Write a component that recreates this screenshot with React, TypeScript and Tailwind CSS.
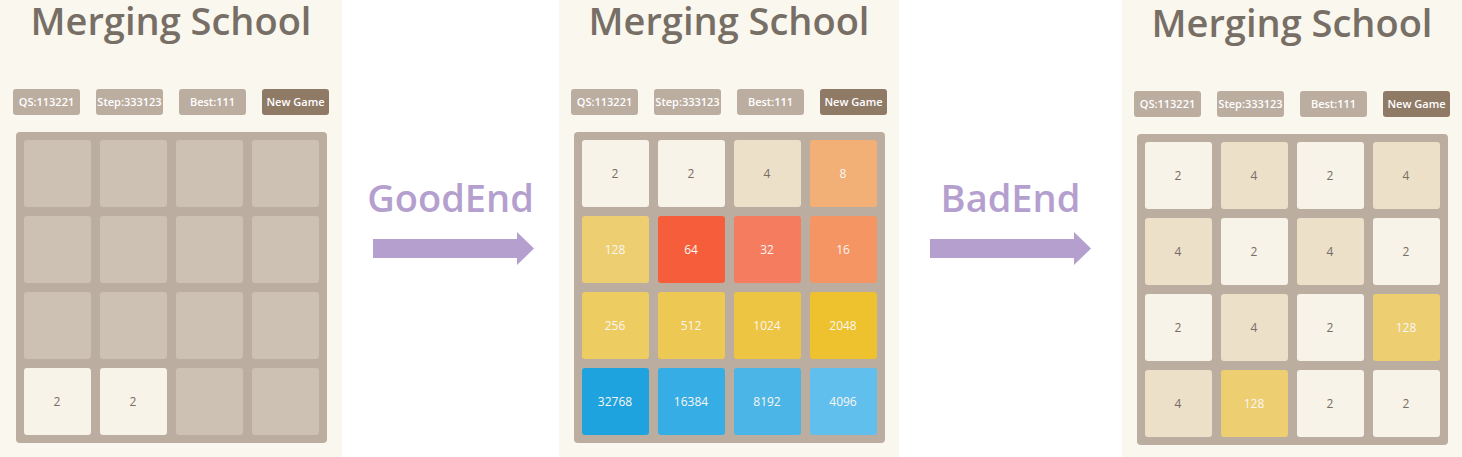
const font = { fontFamily: '"Open Sans", "DejaVu Sans", sans-serif' };

const tileStyles: Record<number, string> = {
  0: "bg-[#cdc1b4]",
  2: "bg-[#f7f3e8] text-[#776e65]",
  4: "bg-[#ece0c9] text-[#776e65]",
  8: "bg-[#f2b077] text-[#f9f6f2]",
  16: "bg-[#f59563] text-[#f9f6f2]",
  32: "bg-[#f67c5f] text-[#f9f6f2]",
  64: "bg-[#f65e3b] text-[#f9f6f2]",
  128: "bg-[#edce71] text-[#f9f6f2]",
  256: "bg-[#edcc62] text-[#f9f6f2]",
  512: "bg-[#edc853] text-[#f9f6f2]",
  1024: "bg-[#eec543] text-[#f9f6f2]",
  2048: "bg-[#edc22e] text-[#f9f6f2]",
  4096: "bg-[#60bfed] text-[#f9f6f2]",
  8192: "bg-[#4bb5e7] text-[#f9f6f2]",
  16384: "bg-[#36aee5] text-[#f9f6f2]",
  32768: "bg-[#1fa3df] text-[#f9f6f2]",
};

const boards = {
  start: [
    [0, 0, 0, 0],
    [0, 0, 0, 0],
    [0, 0, 0, 0],
    [2, 2, 0, 0],
  ],
  good: [
    [2, 2, 4, 8],
    [128, 64, 32, 16],
    [256, 512, 1024, 2048],
    [32768, 16384, 8192, 4096],
  ],
  bad: [
    [2, 4, 2, 4],
    [4, 2, 4, 2],
    [2, 4, 2, 128],
    [4, 128, 2, 2],
  ],
};

function Board({ cells }: { cells: number[][] }) {
  return (
    <div className="grid grid-cols-4 gap-[9px] rounded-[4px] bg-[#bbada0] p-[8px]">
      {cells.flat().map((v, i) => (
        <div
          key={i}
          className={`flex h-[67px] w-[67px] items-center justify-center rounded-[3px] text-[12px] font-medium ${tileStyles[v]}`}
        >
          {v > 0 ? v : ""}
        </div>
      ))}
    </div>
  );
}

function Panel({ cells, width, shift }: { cells: number[][]; width: string; shift: string }) {
  const stats = ["QS:113221", "Step:333123", "Best:111"];
  return (
    <div className={`flex h-[457px] shrink-0 flex-col items-center bg-[#faf7ef] ${width} ${shift}`} style={font}>
      <h1 className="text-[38px] font-semibold leading-[40px] text-[#776e65]">Merging School</h1>
      <div className="mt-[49px] flex gap-4">
        {stats.map((s) => (
          <div
            key={s}
            className="flex h-[26px] w-[67px] items-center justify-center rounded-[3px] bg-[#bbada0] text-[11px] font-semibold text-white"
          >
            {s}
          </div>
        ))}
        <div className="flex h-[26px] w-[67px] items-center justify-center rounded-[3px] bg-[#8f7a66] text-[11px] font-semibold text-white">
          New Game
        </div>
      </div>
      <div className="mt-[17px]">
        <Board cells={cells} />
      </div>
    </div>
  );
}

function Arrow({ label, width, nudge }: { label: string; width: string; nudge: string }) {
  return (
    <div className={`flex shrink-0 flex-col items-center pt-[178px] ${width}`} style={font}>
      <div className="text-[38px] font-semibold leading-[38px] text-[#b49fce]">{label}</div>
      <svg className={`mt-[16px] ${nudge}`} width="161" height="33" viewBox="0 0 161 33">
        <path d="M0 7 H144 V0 L161 16.5 L144 33 V26 H0 Z" fill="#b49fce" />
      </svg>
    </div>
  );
}

export default function App() {
  return (
    <div className="flex h-[457px] w-[1462px] bg-white">
      <Panel cells={boards.start} width="w-[342px]" shift="pt-0" />
      <Arrow label="GoodEnd" width="w-[217px]" nudge="ml-[6px]" />
      <Panel cells={boards.good} width="w-[340px]" shift="pt-0" />
      <Arrow label="BadEnd" width="w-[223px]" nudge="ml-0" />
      <Panel cells={boards.bad} width="w-[340px]" shift="pt-[2px]" />
    </div>
  );
}
